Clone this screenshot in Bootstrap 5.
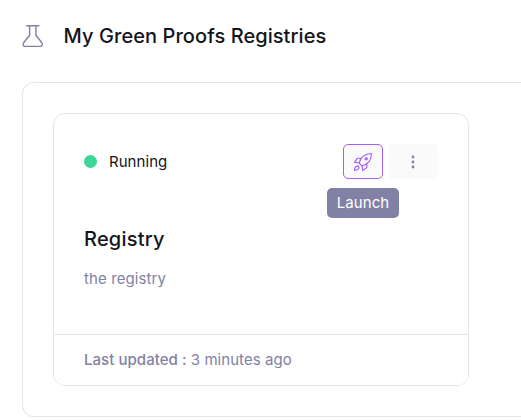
<!DOCTYPE html>
<html lang="en">
<head>
<meta charset="utf-8">
<meta name="viewport" content="width=device-width, initial-scale=1">
<title>My Green Proofs Registries</title>
<link href="https://cdn.jsdelivr.net/npm/bootstrap@5.3.0/dist/css/bootstrap.min.css" rel="stylesheet">
<style>
  body { font-family: Inter, "Liberation Sans", sans-serif; font-size: 15px; line-height: 22px; letter-spacing: .05px; color: #14151a; background: #fff; }
  .page-head { padding: 24px 0 0 22px; height: 82px; }
  .page-title { font-size: 20px; line-height: 24px; font-weight: 500; margin-left: 19.5px; letter-spacing: .07px; }
  .registries { --bs-card-border-color: #e4e4e9; --bs-card-border-radius: 12px; --bs-card-inner-border-radius: 11px; height: 335px; margin-left: 22px; padding: 30px; }
  .registry { --bs-card-border-color: #e4e4e9; --bs-card-border-radius: 12px; --bs-card-inner-border-radius: 11px; --bs-card-cap-bg: #fff; width: 416px; height: 273px; }
  .registry .card-body { padding: 30px; }
  .registry .card-footer { padding: 14px 30px; height: 51px; }
  .status-dot { width: 13px; height: 13px; background: #3dd598; margin-right: 12px; }
  .tool-group { gap: 5px; }
  .tool { height: 35px; background: #fafafa; border: 0; border-radius: 5px; color: #8181a5; }
  .tool-launch { width: 40px; border: 1px solid #a461f5; color: #a461f5; }
  .tool-more { width: 50px; }
  .launch-tip { top: 44px; left: 50%; transform: translateX(-50%); }
  .launch-tip .tooltip-inner { width: 72px; height: 30px; padding: 4px 0; background: #8181a5; border-radius: 5px; font-size: 15px; color: #fff; }
  .registry-name { font-size: 20px; line-height: 24px; font-weight: 500; letter-spacing: .2px; margin: 48px 0 17px; }
  .muted-ink { color: #8181a5; }
  .registry p { letter-spacing: .1px; }
</style>
</head>
<body>
<header class="page-head d-flex align-items-start">
  <svg width="22" height="24" viewBox="0 0 22 24" fill="none" stroke="#8181a5" stroke-width="1.4" stroke-linecap="round" stroke-linejoin="round" aria-hidden="true">
    <path d="M4.700 1.800h12.100M7.600 2v9.200L1.600 18.800c-1.100 1.600-.4 3.600 1.600 3.600h15.100c2 0 2.700-2 1.600-3.600L13.900 11.200V2"/>
  </svg>
  <h1 class="page-title mb-0">My Green Proofs Registries</h1>
</header>
<main class="card registries border-end-0 rounded-end-0">
  <article class="card registry">
    <div class="card-body">
      <div class="d-flex align-items-center justify-content-between">
        <div class="d-flex align-items-center"><span class="status-dot rounded-circle"></span><span>Running</span></div>
        <div class="tool-group d-flex">
          <div class="position-relative">
            <button type="button" class="btn tool tool-launch p-0 d-flex align-items-center justify-content-center" aria-label="Launch" aria-describedby="launch-tip">
              <svg width="20" height="20" viewBox="0 0 20 20" fill="none" stroke="currentColor" stroke-width="1.15" stroke-linecap="round" stroke-linejoin="round">
                <path d="M6.200 11.200C7.300 5.500 11.400 1.700 18.500 1.500C18.300 8.600 14.500 12.700 8.800 13.800Z"/>
                <path d="M8.400 6.200H4.400L1.500 10.400L6.200 10.800M13.800 11.600V15.600L9.600 18.500L9.200 13.800"/>
                <path d="M5.700 14.300C3.500 13.500 1.500 14.800 1.500 18.500C5.200 18.500 6.500 16.500 5.700 14.300Z"/>
                <circle cx="13.200" cy="6.800" r="1.100" fill="currentColor"/>
              </svg>
            </button>
            <div class="launch-tip position-absolute" id="launch-tip" role="tooltip"><div class="tooltip-inner">Launch</div></div>
          </div>
          <button type="button" class="btn tool tool-more p-0 d-flex align-items-center justify-content-center" aria-label="More">
            <svg width="4" height="14" viewBox="0 0 4 14" fill="currentColor"><circle cx="2" cy="2" r="1.400"/><circle cx="2" cy="7" r="1.400"/><circle cx="2" cy="12" r="1.400"/></svg>
          </button>
        </div>
      </div>
      <h2 class="registry-name">Registry</h2>
      <p class="muted-ink mb-0">the registry</p>
    </div>
    <div class="card-footer muted-ink"><span class="fw-medium">Last updated :</span> 3 minutes ago</div>
  </article>
</main>
<script src="https://cdn.jsdelivr.net/npm/bootstrap@5.3.0/dist/js/bootstrap.bundle.min.js"></script>
</body>
</html>
